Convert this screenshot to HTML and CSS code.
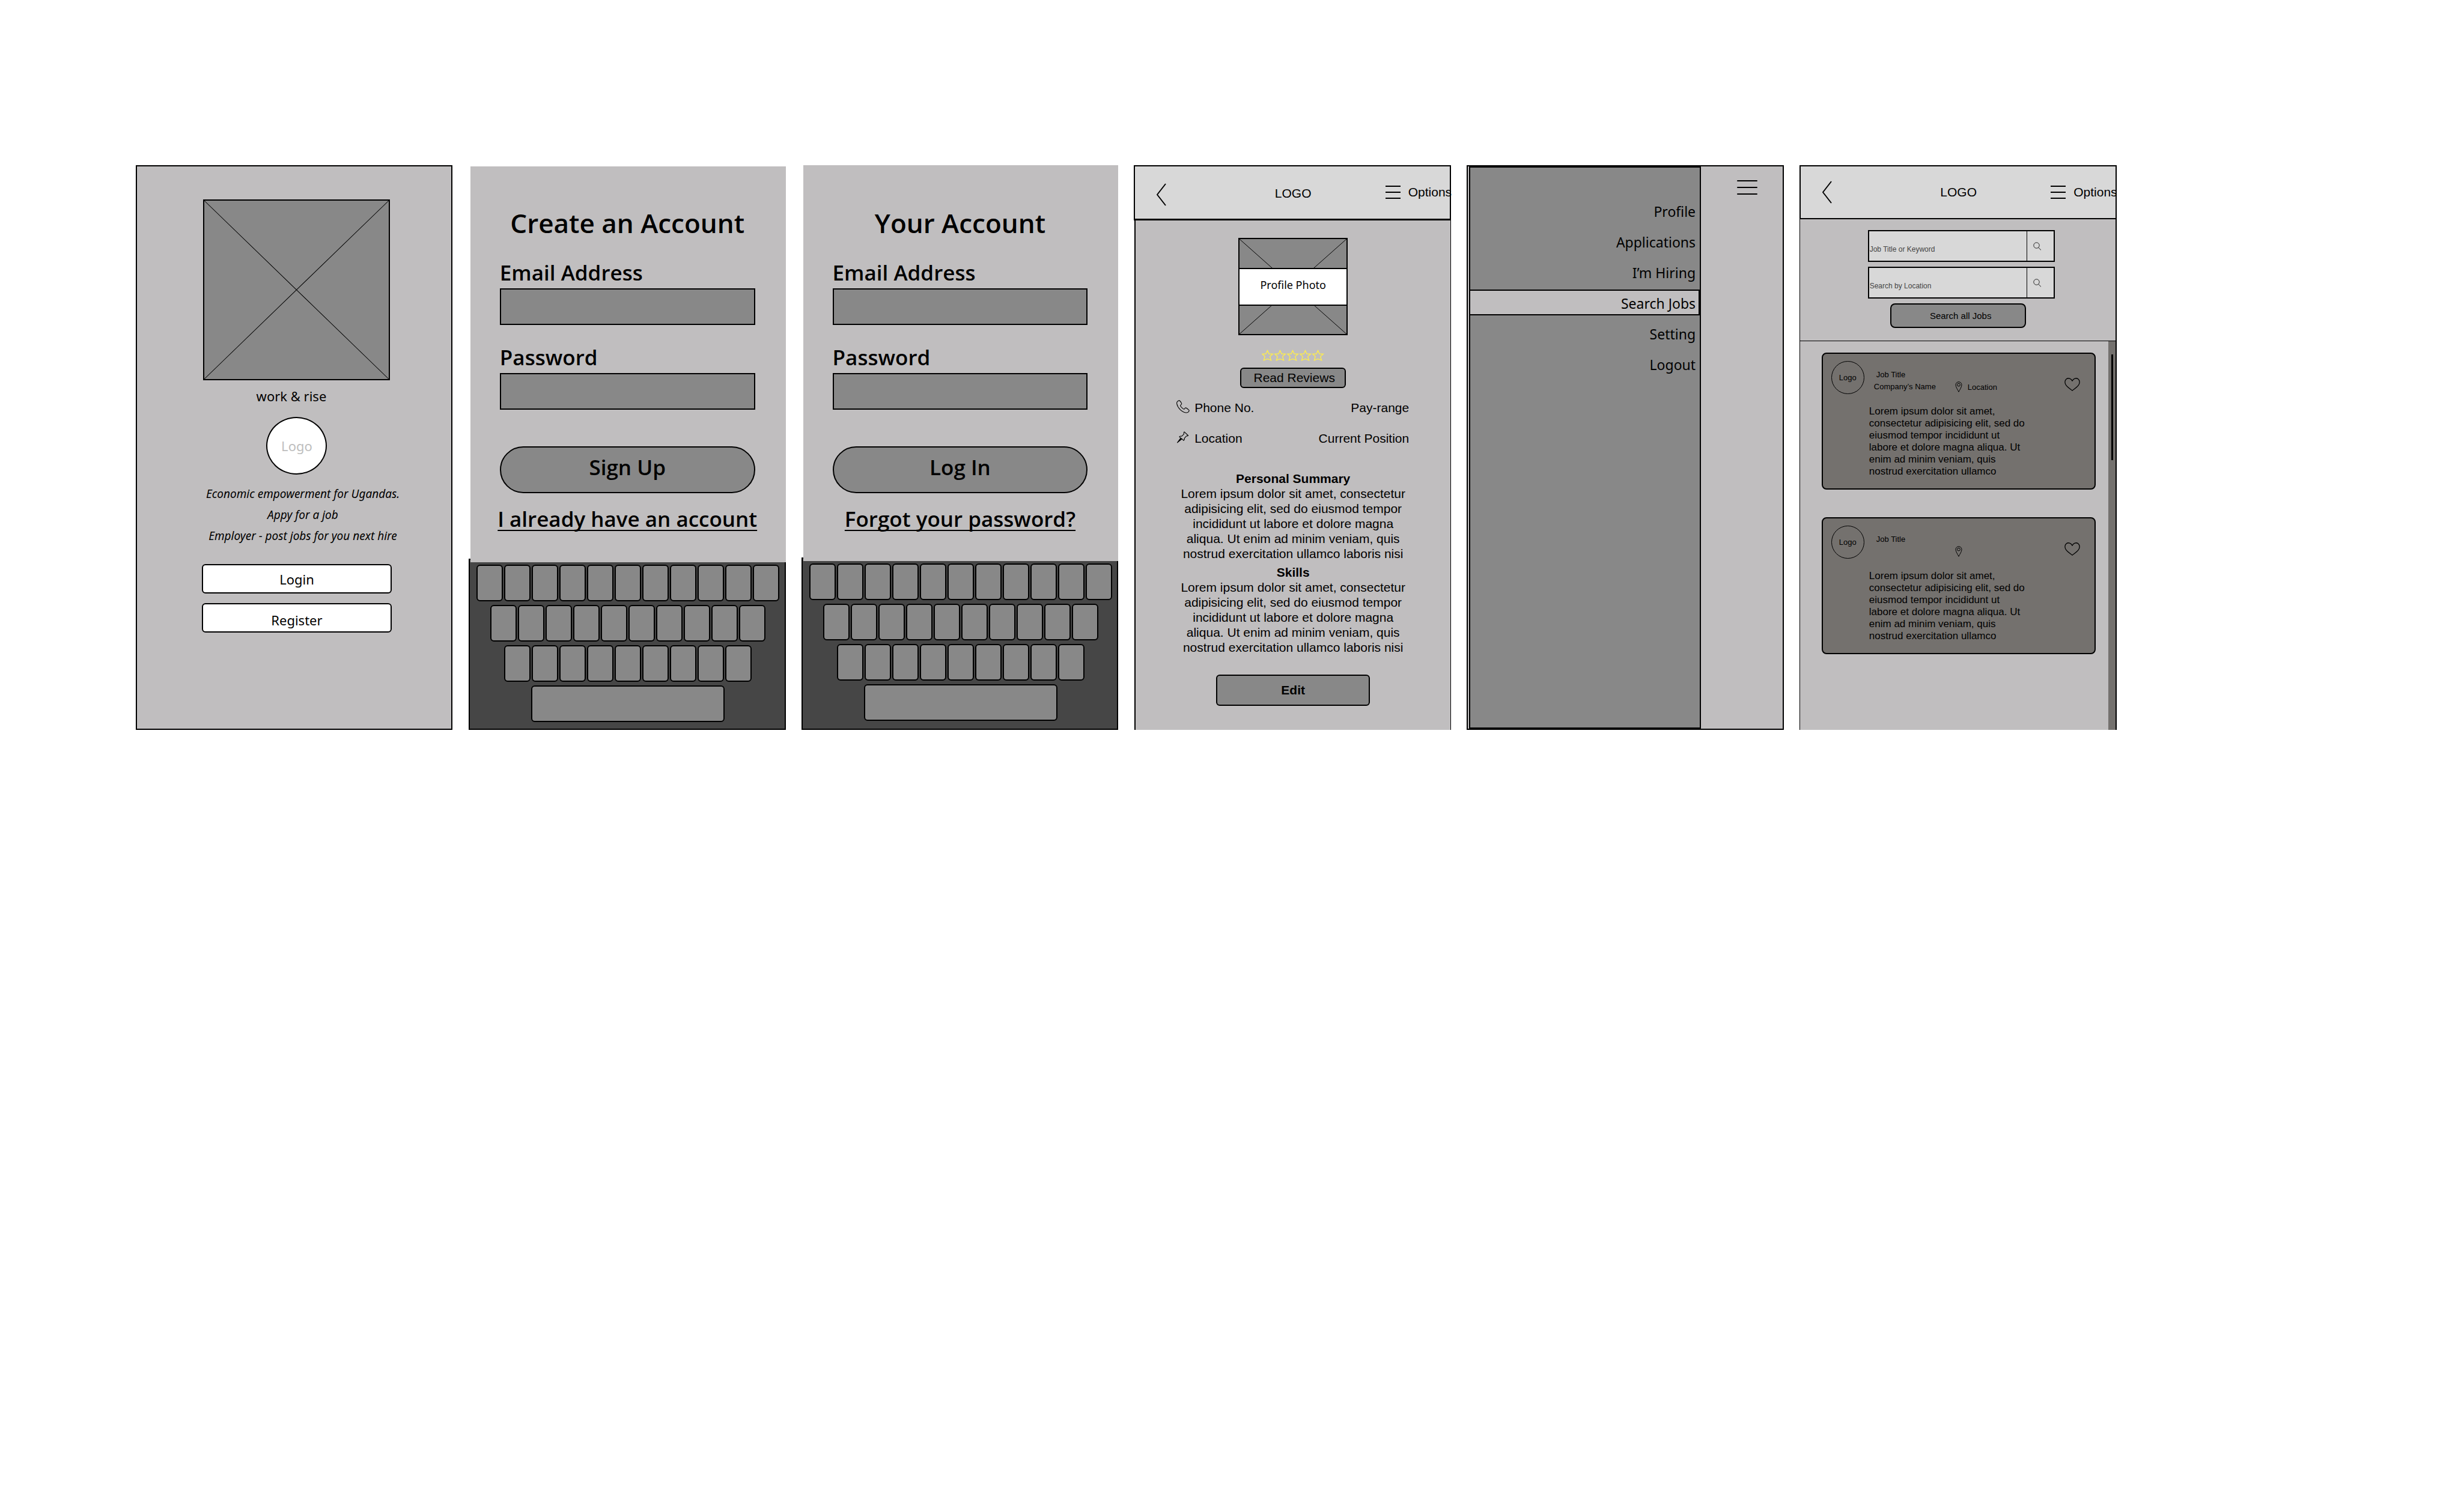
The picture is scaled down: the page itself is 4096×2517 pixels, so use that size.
FILE: index.html
```html
<!DOCTYPE html>
<html lang="en">
<head>
<meta charset="utf-8">
<meta name="viewport" content="width=device-width, initial-scale=1">
<title>work &amp; rise wireframes</title>
<link rel="stylesheet" href="styles.css">
</head>
<body>
<main class="board">

  <section class="screen screen--framed welcome">
    <svg class="placeholder" viewBox="0 0 311 300" preserveAspectRatio="none" role="img" aria-label="Image"><rect x="1" y="1" width="309" height="298" fill="#888" stroke="#000" stroke-width="2"/><path d="M2 2L309 298M309 2L2 298" stroke="#000" stroke-width="1"/></svg>
    <h1 class="welcome__name">work &amp; rise</h1>
    <div class="welcome__logo">Logo</div>
    <p class="welcome__tagline">Economic empowerment for Ugandas.<br>Appy for a job<br>Employer - post jobs for you next hire</p>
    <button type="button" class="welcome__button">Login</button>
    <button type="button" class="welcome__button welcome__button--low">Register</button>
  </section>

  <section class="screen">
    <form class="auth auth--signup">
      <h2 class="auth__title">Create an Account</h2>
      <label class="auth__label" for="signup-email">Email Address</label>
      <input class="auth__input" id="signup-email" type="email">
      <label class="auth__label" for="signup-password">Password</label>
      <input class="auth__input" id="signup-password" type="password">
      <button type="button" class="auth__submit">Sign Up</button>
      <a class="auth__link" href="#login">I already have an account</a>
    </form>
    <div class="keyboard"></div>
  </section>

  <section class="screen" id="login">
    <form class="auth">
      <h2 class="auth__title">Your Account</h2>
      <label class="auth__label" for="login-email">Email Address</label>
      <input class="auth__input" id="login-email" type="email">
      <label class="auth__label" for="login-password">Password</label>
      <input class="auth__input" id="login-password" type="password">
      <button type="button" class="auth__submit">Log In</button>
      <a class="auth__link" href="#forgot">Forgot your password?</a>
    </form>
    <div class="keyboard"></div>
  </section>

  <section class="screen">
    <header class="topbar topbar--profile">
      <a class="topbar__back" href="#back" aria-label="Back"><svg width="16" height="38" viewBox="0 0 16 38" fill="none" stroke="#000" stroke-width="2"><path d="M15 1L1 19L15 37"/></svg></a>
      <span class="topbar__logo">LOGO</span>
      <button type="button" class="topbar__options"><svg width="25" height="22" viewBox="0 0 25 22" stroke="#000" stroke-width="2"><path d="M0 1H25M0 11H25M0 21H25"/></svg>Options</button>
    </header>
    <div class="profile">
      <div class="photo">
        <svg class="photo__cross" viewBox="0 0 178 158" preserveAspectRatio="none" stroke="#000" stroke-width="1"><path d="M0 0L178 158M178 0L0 158"/></svg>
        <span class="photo__label">Profile Photo</span>
      </div>
      <svg class="stars" width="104" height="19" viewBox="0 0 104 19" fill="none" stroke="#fcec4f" stroke-width="1.4" role="img" aria-label="Rating"><defs><path id="star" d="M9.5 1.5L12 7L18.3 7.4L13.6 11.4L15.6 17.8L9.5 15.4L3.4 17.8L5.2 11.4L.9 7.4L7 7Z"/></defs><use href="#star"/><use href="#star" x="21"/><use href="#star" x="42"/><use href="#star" x="63"/><use href="#star" x="84"/></svg>
      <button type="button" class="profile__reviews">Read Reviews</button>
      <div class="facts">
        <div class="facts__row">
          <svg width="22" height="22" viewBox="0 0 22 22" fill="none" stroke="#000" stroke-width="1.1" stroke-linejoin="round"><path d="M4.3 .7C1.6 1.7 .2 3.6 .7 6.2C1.8 12.4 8.6 20 15.8 21C18.3 21.2 20.5 19.7 21.2 17.6C21.3 16.6 20.6 16 16.6 13.2C15.2 12.2 14.3 13.4 13.5 14.6C12.8 15.6 11.6 15 9.8 13.4C7.9 11.8 6.5 10.2 6.6 9C6.8 8 8.6 7.5 8.8 6C8.6 4.8 6 1.6 5.4 1C5 .7 4.7 .6 4.3 .7Z"/></svg>
          <span>Phone No.</span><span class="facts__end">Pay-range</span>
        </div>
        <div class="facts__row">
          <svg width="22" height="22" viewBox="0 0 22 22" fill="none" stroke="#000" stroke-width="1.1" stroke-linejoin="round"><path d="M13 1.8L19.6 8C18.6 9 17.6 8.8 16.6 8.8L13.2 12.6C13.7 14.4 13.3 15.4 11.8 16.2L9.3 13.6L1.5 19.8L7.2 12.2L4.9 10.2C6 8.8 7.4 8.8 8.9 9.2L12.5 5.6C12 4 12.1 2.8 13 1.8ZM9.3 13.6L7.2 12.2M8.2 13L1.5 19.8"/></svg>
          <span>Location</span><span class="facts__end">Current Position</span>
        </div>
      </div>
      <div class="about">
        <h3>Personal Summary</h3>
        <p>Lorem ipsum dolor sit amet, consectetur adipisicing elit, sed do eiusmod tempor incididunt ut labore et dolore magna aliqua. Ut enim ad minim veniam, quis nostrud exercitation ullamco laboris nisi</p>
        <h3>Skills</h3>
        <p>Lorem ipsum dolor sit amet, consectetur adipisicing elit, sed do eiusmod tempor incididunt ut labore et dolore magna aliqua. Ut enim ad minim veniam, quis nostrud exercitation ullamco laboris nisi</p>
      </div>
      <button type="button" class="profile__edit">Edit</button>
    </div>
  </section>

  <section class="screen screen--framed menu">
    <nav class="drawer">
      <a href="#profile">Profile</a>
      <a href="#applications">Applications</a>
      <a href="#hiring">I’m Hiring</a>
      <a class="is-active" href="#search">Search Jobs</a>
      <a href="#setting">Setting</a>
      <a href="#logout">Logout</a>
    </nav>
    <button type="button" class="menu__toggle" aria-label="Menu"><svg width="34" height="24" viewBox="0 0 34 24" stroke="#000" stroke-width="2" stroke-linecap="round"><path d="M1 1H33M1 12H33M1 23H33"/></svg></button>
  </section>

  <section class="screen">
    <header class="topbar">
      <a class="topbar__back" href="#back" aria-label="Back"><svg width="16" height="38" viewBox="0 0 16 38" fill="none" stroke="#000" stroke-width="2"><path d="M15 1L1 19L15 37"/></svg></a>
      <span class="topbar__logo">LOGO</span>
      <button type="button" class="topbar__options"><svg width="25" height="22" viewBox="0 0 25 22" stroke="#000" stroke-width="2"><path d="M0 1H25M0 11H25M0 21H25"/></svg>Options</button>
    </header>
    <div class="jobs">
      <form class="search">
        <div class="search__fields">
          <div class="search__field"><input type="text" aria-label="Job Title or Keyword" placeholder="Job Title or Keyword"><button type="button" aria-label="Search by keyword"><svg width="14" height="14" viewBox="0 0 14 14" fill="none" stroke="#222" stroke-width="1"><circle cx="5.5" cy="5.5" r="4.7"/><path d="M8.5 9L13 13.3"/></svg></button></div>
          <div class="search__field"><input type="text" aria-label="Search by Location" placeholder="Search by Location"><button type="button" aria-label="Search this location"><svg width="14" height="14" viewBox="0 0 14 14" fill="none" stroke="#222" stroke-width="1"><circle cx="5.5" cy="5.5" r="4.7"/><path d="M8.5 9L13 13.3"/></svg></button></div>
        </div>
        <button type="button" class="search__submit">Search all Jobs</button>
      </form>
      <div class="results">
        <div class="results__list">
          <article class="card">
            <div class="card__head">
              <div class="card__logo">Logo</div>
              <div class="card__meta"><span class="card__title">Job Title</span><span>Company’s Name</span></div>
              <div class="card__place"><svg width="12" height="18" viewBox="0 0 12 18" fill="none" stroke="#000" stroke-width="1"><path d="M6 17.3C4.5 14 1 9.5 1 5.7A5 5 0 0 1 11 5.7C11 9.5 7.5 14 6 17.3Z"/><circle cx="6" cy="5.6" r="2.4"/></svg><span>Location</span></div>
              <button type="button" class="card__save" aria-label="Save job"><svg width="26" height="22" viewBox="0 0 26 22" fill="none" stroke="#000" stroke-width="1.3" stroke-linejoin="round"><path d="M13 5.2C11.5 1.2 6.5 -.6 3.1 2C-.2 4.9 .6 9.4 2.8 12.4C5.6 16.2 10 18.8 13 21.2C16 18.8 20.4 16.2 23.2 12.4C25.4 9.4 26.2 4.9 22.9 2C19.5 -.6 14.5 1.2 13 5.2Z"/></svg></button>
            </div>
            <p class="card__text">Lorem ipsum dolor sit amet, consectetur adipisicing elit, sed do eiusmod tempor incididunt ut labore et dolore magna aliqua. Ut enim ad minim veniam, quis nostrud exercitation ullamco</p>
          </article>
          <article class="card">
            <div class="card__head">
              <div class="card__logo">Logo</div>
              <div class="card__meta"><span class="card__title">Job Title</span><span></span></div>
              <div class="card__place"><svg width="12" height="18" viewBox="0 0 12 18" fill="none" stroke="#000" stroke-width="1"><path d="M6 17.3C4.5 14 1 9.5 1 5.7A5 5 0 0 1 11 5.7C11 9.5 7.5 14 6 17.3Z"/><circle cx="6" cy="5.6" r="2.4"/></svg></div>
              <button type="button" class="card__save" aria-label="Save job"><svg width="26" height="22" viewBox="0 0 26 22" fill="none" stroke="#000" stroke-width="1.3" stroke-linejoin="round"><path d="M13 5.2C11.5 1.2 6.5 -.6 3.1 2C-.2 4.9 .6 9.4 2.8 12.4C5.6 16.2 10 18.8 13 21.2C16 18.8 20.4 16.2 23.2 12.4C25.4 9.4 26.2 4.9 22.9 2C19.5 -.6 14.5 1.2 13 5.2Z"/></svg></button>
            </div>
            <p class="card__text">Lorem ipsum dolor sit amet, consectetur adipisicing elit, sed do eiusmod tempor incididunt ut labore et dolore magna aliqua. Ut enim ad minim veniam, quis nostrud exercitation ullamco</p>
          </article>
        </div>
        <div class="results__track"><div class="results__thumb"></div></div>
      </div>
    </div>
  </section>

</main>
<script src="keyboard.js"></script>
</body>
</html>
```
FILE: styles.css
```css
:root {
  --paper: #c0bebf;
  --fill: #888;
  --bar: #d8d8d8;
  --card: #74716e;
  --ink: #000;
  --humanist: "Noto Sans", "Open Sans", sans-serif;
  --display: "Open Sans", "Noto Sans", sans-serif;
  --grotesk: "Liberation Sans", Arial, sans-serif;
}

* { box-sizing: border-box; }

body {
  margin: 0;
  background: #fff;
  color: var(--ink);
  font-family: var(--grotesk);
  font-size: 21px;
}

h1, h2, h3, p { margin: 0; font-weight: 400; }

button, input { font: inherit; color: inherit; margin: 0; }
button { padding: 0; background: none; border: 0; cursor: pointer; }
a { color: inherit; text-decoration: none; }
svg { display: block; flex: none; }

.board {
  display: grid;
  grid-template-columns: repeat(6, minmax(0, 1fr));
  gap: 26px;
  padding: 275px 14% 0 5.52%;
}

.screen {
  display: flex;
  flex-direction: column;
  min-height: 940px;
}

.screen--framed {
  background: var(--paper);
  border: 2px solid var(--ink);
}

/* Welcome */
.welcome {
  align-items: center;
  margin-right: 1px;
  padding: 55px 0 0 9px;
  font-family: var(--humanist);
  font-size: 22px;
}
.placeholder { width: 311px; height: 301px; }
.welcome__name {
  margin-top: 11px;
  padding-right: 18px;
  font-size: 22px;
  line-height: 30px;
}
.welcome__logo {
  display: flex;
  align-items: center;
  justify-content: center;
  width: 101px;
  height: 96px;
  margin-top: 20px;
  background: #fff;
  border: 2px solid var(--ink);
  border-radius: 50%;
  color: #bebebe;
}
.welcome__tagline {
  margin: 15px 0 29px;
  padding-left: 20px;
  font-size: 19px;
  font-style: italic;
  line-height: 35px;
  text-align: center;
  white-space: nowrap;
}
.welcome__button {
  width: 316px;
  height: 49px;
  background: #fff;
  border: 2px solid var(--ink);
  border-radius: 6px;
}
.welcome__button--low { margin-top: 16px; padding-top: 6px; }

/* Sign up and log in */
.auth {
  position: relative;
  z-index: 1;
  display: flex;
  flex-direction: column;
  height: 659px;
  margin-left: 3px;
  padding: 66px 51px 0 49px;
  background: var(--paper);
  font-family: var(--display);
  font-size: 35px;
  font-weight: 600;
}
.auth--signup { margin-top: 2px; padding-top: 64px; }
.auth__title {
  margin-bottom: 29px;
  font-size: 44px;
  font-weight: 600;
  line-height: 60px;
  text-align: center;
  white-space: nowrap;
}
.auth__label { line-height: 48px; }
.auth__input {
  width: 100%;
  height: 61px;
  margin: 2px 0 30px;
  padding: 0 12px;
  background: var(--fill);
  border: 2px solid var(--ink);
  border-radius: 0;
}
.auth__submit {
  height: 78px;
  margin-top: 31px;
  padding-bottom: 10px;
  background: var(--fill);
  border: 2px solid var(--ink);
  border-radius: 39px;
}
.auth__link {
  align-self: center;
  margin-top: 19px;
  line-height: 48px;
  white-space: nowrap;
  text-decoration: underline;
  text-decoration-thickness: 2px;
  text-underline-offset: 5px;
  text-decoration-skip-ink: none;
}

.keyboard {
  display: flex;
  flex: 1;
  flex-direction: column;
  gap: 6px;
  margin-top: -6px;
  padding: 8px 0 0 3px;
  background: #464646;
  border: 2px solid var(--ink);
}
.keyboard__row { display: flex; justify-content: center; gap: 2px; }
.keyboard__key {
  width: 44px;
  height: 61px;
  background: var(--fill);
  border: 2px solid var(--ink);
  border-radius: 6px;
}
.keyboard__key--space { width: 322px; }

/* Top bar */
.topbar {
  display: grid;
  grid-template-columns: 1fr auto 1fr;
  align-items: center;
  height: 90px;
  padding-left: 36px;
  background: var(--bar);
  border: 2px solid var(--ink);
}
.topbar__back { justify-self: start; }
.topbar__logo { margin-left: -34px; }
.topbar__options {
  display: flex;
  align-items: center;
  justify-self: end;
  gap: 13px;
  margin-right: -3px;
}
.topbar--profile { height: 92px; padding-bottom: 1px; border-bottom-width: 3px; }
.topbar--profile .topbar__back { padding-top: 8px; }
.topbar--profile .topbar__logo { padding-top: 4px; }

/* Profile */
.profile {
  display: flex;
  flex: 1;
  flex-direction: column;
  align-items: center;
  margin-left: 1px;
  padding-top: 29px;
  background: var(--paper);
  border-left: 2px solid var(--ink);
  border-right: 1px solid var(--ink);
}
.photo {
  display: grid;
  align-items: center;
  width: 182px;
  height: 162px;
  background: var(--fill);
  border: 2px solid var(--ink);
  font-family: var(--humanist);
}
.photo__cross { grid-area: 1 / 1; width: 100%; height: 158px; }
.photo__label {
  z-index: 1;
  grid-area: 1 / 1;
  height: 63px;
  padding-bottom: 7px;
  background: #fff;
  border: solid var(--ink);
  border-width: 2px 0;
  font-size: 18px;
  line-height: 52px;
  text-align: center;
}
.stars { margin: 24px 0 11px; }
.profile__reviews {
  width: 176px;
  height: 34px;
  padding-left: 4px;
  background: var(--fill);
  border: 2px solid var(--ink);
  border-radius: 6px;
}
.facts {
  display: flex;
  flex-direction: column;
  gap: 25px;
  width: 388px;
  margin-top: 20px;
}
.facts__row { display: flex; gap: 8px; padding-right: 1px; line-height: 26px; }
.facts__end { margin-left: auto; }
.about {
  width: 388px;
  margin: 41px 0 33px;
  line-height: 25px;
  text-align: center;
}
.about h3 { font-size: 21px; font-weight: 700; }
.about p + h3 { margin-top: 6px; }
.profile__edit {
  width: 256px;
  height: 52px;
  background: var(--fill);
  border: 2px solid var(--ink);
  border-radius: 6px;
  font-weight: 700;
}

/* Menu */
.menu { flex-direction: row; padding-left: 2px; }
.drawer {
  display: flex;
  flex-direction: column;
  gap: 8px;
  width: 386px;
  padding-top: 50px;
  background: var(--fill);
  border: 2px solid var(--ink);
  font-family: var(--humanist);
  font-size: 23px;
  line-height: 36px;
  text-align: right;
}
.drawer a {
  padding: 3px 5px 0;
  border: solid transparent;
  border-width: 2px 2px 2px 0;
}
.drawer .is-active { background: var(--paper); border-color: var(--ink); }
.menu__toggle { align-self: flex-start; margin: 23px 42px 0 auto; }

/* Job search */
.jobs {
  display: flex;
  flex: 1;
  flex-direction: column;
  background: var(--paper);
  border-left: 1px solid var(--ink);
  border-right: 2px solid var(--ink);
}
.search {
  display: flex;
  flex-direction: column;
  align-items: center;
  padding: 18px 0 21px 2px;
  border-bottom: 1px solid var(--ink);
}
.search__fields {
  display: flex;
  flex-direction: column;
  gap: 8px;
  padding-left: 10px;
  font-size: 12px;
}
.search__field {
  display: flex;
  width: 311px;
  height: 53px;
  background: var(--bar);
  border: 2px solid var(--ink);
}
.search__field input {
  flex: 1;
  min-width: 0;
  padding: 11px 0 0 1px;
  background: none;
  border: 0;
}
.search__field input::placeholder { color: #444; opacity: 1; }
.search__field button {
  width: 45px;
  padding-left: 10px;
  border-left: 1px solid var(--ink);
}
.search__submit {
  width: 226px;
  height: 41px;
  margin-top: 8px;
  padding-left: 8px;
  background: var(--fill);
  border: 2px solid var(--ink);
  border-radius: 8px;
  font-size: 15px;
}
.results { display: flex; flex: 1; }
.results__list {
  display: flex;
  flex: 1;
  flex-direction: column;
  gap: 46px;
  padding: 19px 21px 0 36px;
}
.results__track {
  width: 12px;
  padding: 22px 4px 0 5px;
  background: var(--card);
}
.results__thumb { height: 176px; background: var(--ink); }

.card {
  padding: 12px 24px 18px 14px;
  background: var(--card);
  border: 2px solid var(--ink);
  border-radius: 8px;
  font-size: 13px;
  line-height: 20px;
}
.card__head { display: flex; align-items: flex-end; }
.card__logo {
  width: 55px;
  height: 55px;
  border: 1px solid var(--ink);
  border-radius: 50%;
  line-height: 53px;
  text-align: center;
}
.card__meta {
  display: flex;
  flex-direction: column;
  width: 135px;
  margin: 0 0 2px 16px;
}
.card__meta span { min-height: 20px; }
.card__meta .card__title { padding-left: 4px; }
.card__place { display: flex; gap: 9px; height: 20px; margin-bottom: 1px; }
.card__save { margin: 0 0 5px auto; }
.card__text {
  width: 262px;
  margin: 19px 0 0 63px;
  font-size: 17px;
}
```
FILE: keyboard.js
```js
// Fills every on-screen keyboard with its rows of blank keys.
const rows = [
  ["q", "w", "e", "r", "t", "y", "u", "i", "o", "p", "backspace"],
  ["a", "s", "d", "f", "g", "h", "j", "k", "l", "enter"],
  ["z", "x", "c", "v", "b", "n", "m", "comma", "period"],
  ["space"]
];

document.querySelectorAll(".keyboard").forEach((keyboard) => {
  rows.forEach((names) => {
    const row = document.createElement("div");
    row.className = "keyboard__row";
    names.forEach((name) => {
      const key = document.createElement("button");
      key.type = "button";
      key.className = "keyboard__key";
      if (name === "space") key.classList.add("keyboard__key--space");
      key.setAttribute("aria-label", name);
      row.append(key);
    });
    keyboard.append(row);
  });
});
```
